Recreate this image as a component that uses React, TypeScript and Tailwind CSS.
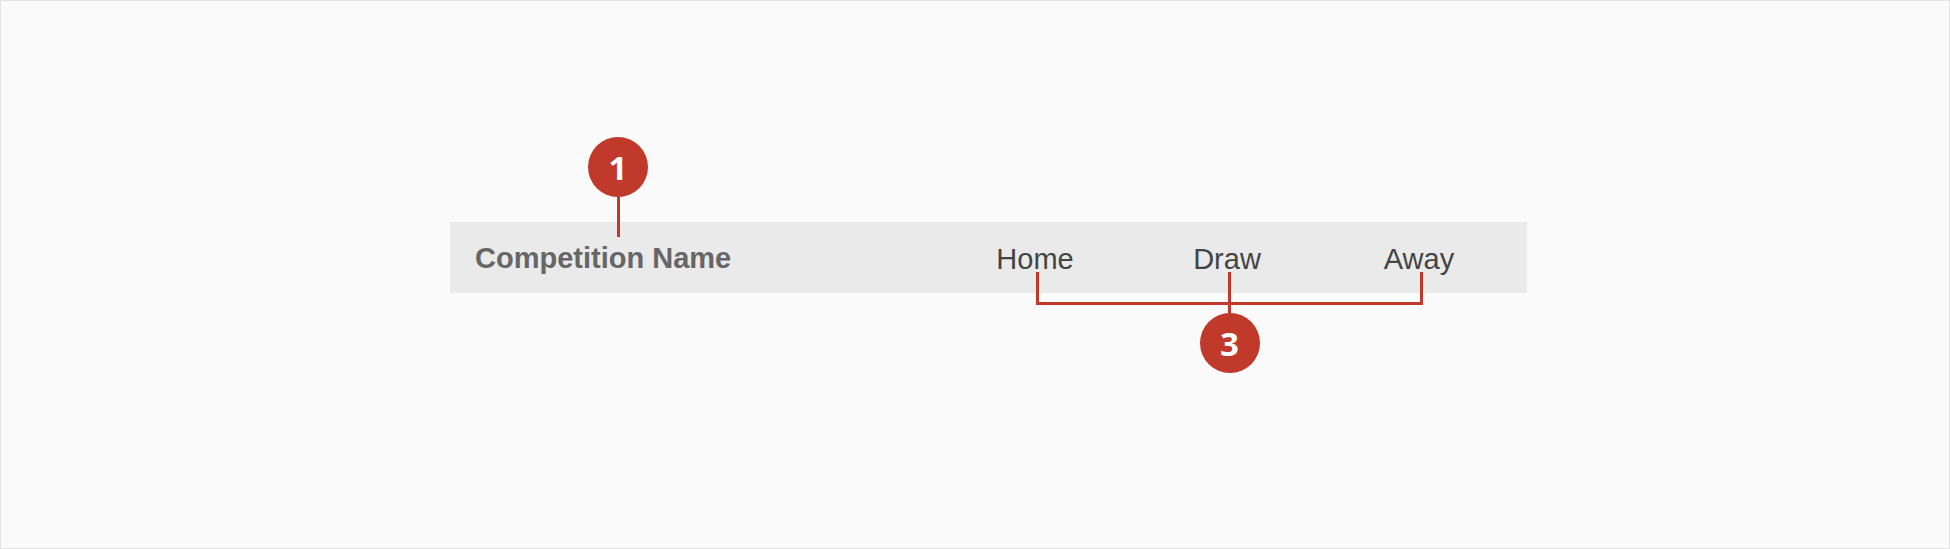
import React from "react";

const columns = ["Home", "Draw", "Away"];

const Marker: React.FC<{ label: string }> = ({ label }) => (
  <div
    className="w-[60px] h-[60px] shrink-0 rounded-full bg-[#c0392b] flex items-center justify-center text-white text-[33px] font-bold leading-none"
    style={{ fontFamily: '"Open Sans", "Liberation Sans", sans-serif' }}
  >
    {label}
  </div>
);

export default function App() {
  return (
    <div className="relative w-[1950px] h-[549px] bg-[#fafafa] border border-[#e3e3e3] overflow-hidden">
      {/* header row */}
      <div
        className="ml-[449px] mt-[221px] w-[1077px] h-[71px] bg-[#eaeaea] flex items-center pr-[12px]"
        style={{ fontFamily: '"Liberation Sans", Arial, sans-serif' }}
      >
        <div className="flex-1 pl-[25px] pt-[2px] text-[29px] font-bold text-[#666666]">
          Competition Name
        </div>
        {columns.map((col) => (
          <div key={col} className="w-[192px] pt-[4px] text-center text-[29px] text-[#444444]">
            {col}
          </div>
        ))}
      </div>

      {/* callout 1 */}
      <div className="absolute left-[587px] top-[136px] flex flex-col items-center">
        <Marker label="1" />
        <div className="w-[3px] h-[40px] bg-[#c0392b]" />
      </div>

      {/* callout 3 bracket */}
      <div className="absolute left-[1035px] top-[271px] w-[387px] h-[33px] border-x-[3px] border-b-[3px] border-[#c0392b] flex flex-col items-center">
        <div className="w-[3px] h-[41px] shrink-0 bg-[#c0392b]" />
        <Marker label="3" />
      </div>
    </div>
  );
}
